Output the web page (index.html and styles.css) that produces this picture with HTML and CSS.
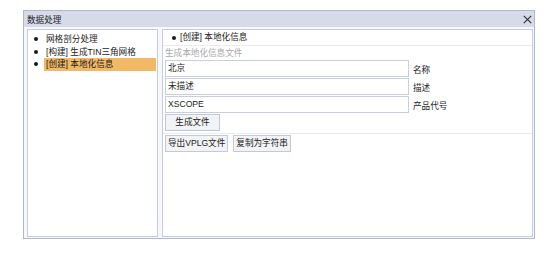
FILE: index.html
```html
<!DOCTYPE html>
<html lang="zh-CN">
<head>
<meta charset="utf-8">
<title>数据处理</title>
<link rel="stylesheet" href="styles.css">
</head>
<body>
<div class="window">
  <div class="titlebar">
    <span class="title">数据处理</span>
    <svg class="close" width="9" height="9" viewBox="0 0 9 9"><path d="M0.8 0.8 L8.2 8.2 M8.2 0.8 L0.8 8.2" stroke="#333" stroke-width="1.2" fill="none"/></svg>
  </div>
  <div class="body">
    <div class="panel left">
      <ul class="tree">
        <li class="item"><span class="dot"></span><span class="label">网格剖分处理</span></li>
        <li class="item"><span class="dot"></span><span class="label">[构建] 生成TIN三角网格</span></li>
        <li class="item"><span class="dot"></span><span class="label selected">[创建] 本地化信息</span></li>
      </ul>
    </div>
    <div class="panel right">
      <div class="header"><span class="dot"></span><span class="label">[创建] 本地化信息</span></div>
      <div class="section">
        <div class="legend">生成本地化信息文件</div>
        <div class="row"><div class="input">北京</div><span class="field-label">名称</span></div>
        <div class="row"><div class="input">未描述</div><span class="field-label">描述</span></div>
        <div class="row"><div class="input">XSCOPE</div><span class="field-label">产品代号</span></div>
        <div class="row"><div class="btn btn-gen">生成文件</div></div>
      </div>
      <div class="actions">
        <div class="btn">导出VPLG文件</div>
        <div class="btn">复制为字符串</div>
      </div>
    </div>
  </div>
</div>
</body>
</html>
```

FILE: styles.css
```css
html, body {
  margin: 0;
  padding: 0;
  background: #ffffff;
}
body {
  font-family: "Liberation Sans", "Noto Sans CJK SC", sans-serif;
  font-size: 8.6px;
  color: #222222;
}
.window {
  margin: 10px 0 0 23px;
  width: 510px;
  height: 227px;
  border: 1px solid #aeb7cf;
  display: flex;
  flex-direction: column;
  background: #f7f8fb;
}
.titlebar {
  height: 16px;
  background: #d7dbe9;
  display: flex;
  align-items: center;
  justify-content: space-between;
  padding: 0 2px 0 3px;
}
.title {
  line-height: 16px;
  padding-top: 1px;
}
.close {
  display: block;
  margin-top: 1px;
}
.body {
  flex: 1;
  display: flex;
  gap: 4px;
  padding: 2px 1px 1px 3px;
}
.panel {
  border: 1px solid #c5cce0;
  background: #ffffff;
  box-sizing: border-box;
}
.left {
  width: 131px;
}
.right {
  width: 371px;
  display: flex;
  flex-direction: column;
}
.tree {
  list-style: none;
  margin: 0;
  padding: 3px 0 0 0;
}
.item {
  height: 12.5px;
  display: flex;
  align-items: center;
  padding-left: 6px;
}
.dot {
  width: 4px;
  height: 4px;
  border-radius: 50%;
  background: #1a1a1a;
  flex: none;
}
.item .label {
  margin-left: 6px;
  padding: 0 2px;
  line-height: 12.5px;
  white-space: nowrap;
}
.item .label.selected {
  background: #f1b865;
  flex: 1;
  margin-right: 1px;
}
.header {
  height: 15px;
  display: flex;
  align-items: center;
  padding-left: 9px;
  border-bottom: 1px solid #ebebef;
}
.header .label {
  margin-left: 4px;
  line-height: 15px;
}
.section {
  padding: 0 0 1px 2px;
  border-bottom: 1px solid #ebebef;
}
.legend {
  color: #a9a9a9;
  line-height: 14px;
}
.row {
  display: flex;
  align-items: center;
  margin-bottom: 1px;
}
.input {
  width: 240px;
  height: 15px;
  border: 1px solid #c7cee0;
  background: #ffffff;
  padding-left: 2px;
  line-height: 15px;
}
.field-label {
  margin-left: 4px;
}
.btn {
  height: 15px;
  line-height: 15px;
  border: 1px solid #c3c9da;
  background: #f2f3f6;
  padding: 0 2px;
  white-space: nowrap;
}
.btn-gen {
  width: 49px;
  text-align: center;
}
.actions {
  display: flex;
  gap: 5px;
  padding: 1px 0 0 2px;
}
```
